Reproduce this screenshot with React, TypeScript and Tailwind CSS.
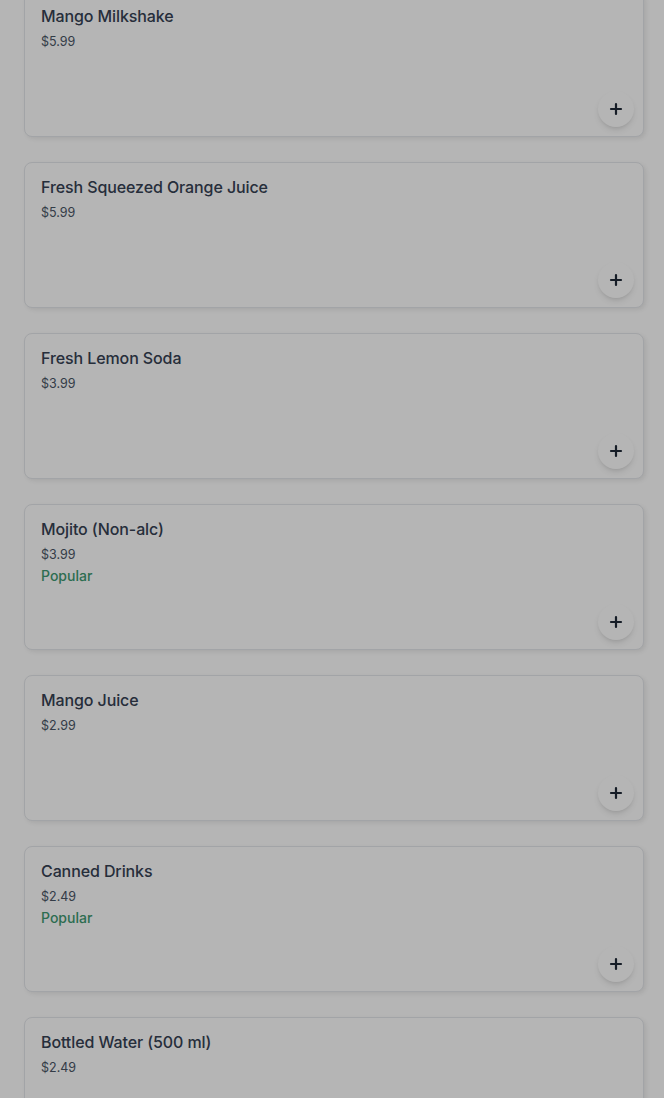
import React from "react";

type Item = { name: string; price: string; popular?: boolean };

const items: Item[] = [
  { name: "Mango Milkshake", price: "$5.99" },
  { name: "Fresh Squeezed Orange Juice", price: "$5.99" },
  { name: "Fresh Lemon Soda", price: "$3.99" },
  { name: "Mojito (Non-alc)", price: "$3.99", popular: true },
  { name: "Mango Juice", price: "$2.99" },
  { name: "Canned Drinks", price: "$2.49", popular: true },
  { name: "Bottled Water (500 ml)", price: "$2.49" },
];

function PlusIcon() {
  return (
    <svg width="14" height="14" viewBox="0 0 14 14" fill="none">
      <path d="M7 2v10M2 7h10" stroke="#1f2937" strokeWidth="2.2" strokeLinecap="round" />
    </svg>
  );
}

export default function App() {
  return (
    <div className="relative min-h-[1098px] bg-white overflow-hidden" style={{ fontFamily: "Inter, 'Noto Sans', sans-serif" }}>
      <div className="pl-6 pr-5 -mt-[9px] flex flex-col gap-[25px]">
        {items.map((it) => (
          <div
            key={it.name}
            className="h-[146px] rounded-lg border border-gray-200 bg-white shadow-[2px_2px_4px_rgba(0,0,0,0.08)] flex flex-col pl-4 pr-[9px] pt-[12px] pb-[9px]"
          >
            <div className="text-base leading-6 font-medium text-gray-700 tracking-[-0.1px]">{it.name}</div>
            <div className="mt-[4px] text-[12.5px] leading-5 text-gray-600">{it.price}</div>
            {it.popular && <div className="mt-px text-sm leading-5 font-medium text-[#3f9a72]">Popular</div>}
            <button className="mt-auto self-end w-9 h-9 rounded-full bg-white shadow-md flex items-center justify-center">
              <PlusIcon />
            </button>
          </div>
        ))}
      </div>
      <div className="fixed inset-0 bg-black/[0.29]" />
    </div>
  );
}
